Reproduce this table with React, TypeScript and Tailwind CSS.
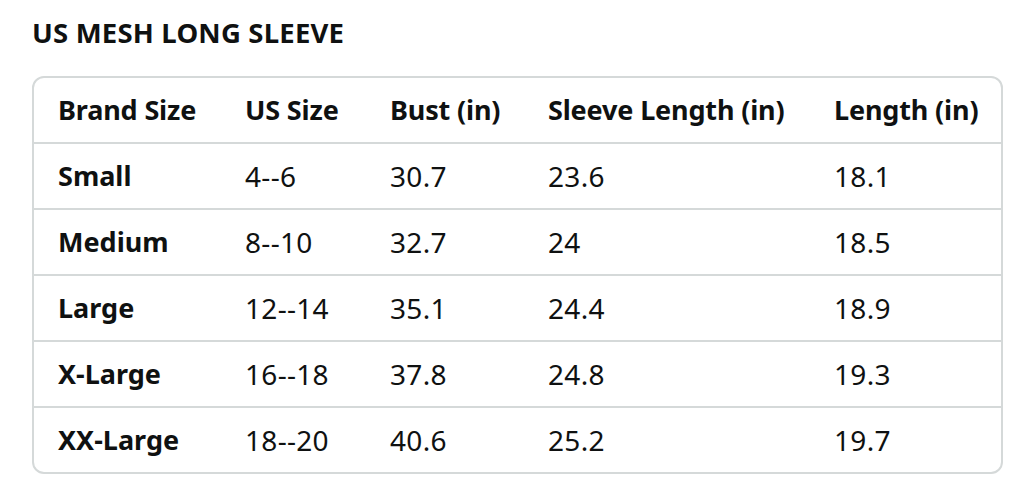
const headers = ['Brand Size', 'US Size', 'Bust (in)', 'Sleeve Length (in)', 'Length (in)']

const rows = [
  ['Small', '4--6', '30.7', '23.6', '18.1'],
  ['Medium', '8--10', '32.7', '24', '18.5'],
  ['Large', '12--14', '35.1', '24.4', '18.9'],
  ['X-Large', '16--18', '37.8', '24.8', '19.3'],
  ['XX-Large', '18--20', '40.6', '25.2', '19.7'],
]

const colWidths = ['w-[187px]', 'w-[145px]', 'w-[158px]', 'w-[286px]', 'w-auto']

export default function App() {
  return (
    <div className="w-[1036px] h-[497px] bg-white text-[#0f1111] font-['Noto_Sans',sans-serif]">
      <div className="pl-[32px] pt-[13px]">
        <h1 className="text-[27.5px] leading-[40px] font-bold tracking-[0.2px]">US MESH LONG SLEEVE</h1>
        <div className="mt-[23px] w-[971px] rounded-[12px] border-2 border-[#d5d9d9] overflow-hidden">
          <table className="w-full table-fixed border-collapse">
            <colgroup>
              {colWidths.map((w, i) => (
                <col key={i} className={w} />
              ))}
            </colgroup>
            <thead>
              <tr className="h-[65px]">
                {headers.map((h) => (
                  <th key={h} className="pl-[24px] text-left text-[27px] font-bold tracking-[-0.15px] whitespace-nowrap">
                    {h}
                  </th>
                ))}
              </tr>
            </thead>
            <tbody>
              {rows.map((r, ri) => (
                <tr key={r[0]} className={`${ri === rows.length - 1 ? 'h-[65px]' : 'h-[66px]'} border-t-[2px] border-[#d5d9d9]`}>
                  {r.map((c, i) => (
                    <td
                      key={i}
                      className={`pl-[24px] whitespace-nowrap ${i === 0 ? 'text-[27px] font-bold' : 'text-[28px] font-normal tracking-[0.3px]'}`}
                    >
                      {c}
                    </td>
                  ))}
                </tr>
              ))}
            </tbody>
          </table>
        </div>
      </div>
    </div>
  )
}
